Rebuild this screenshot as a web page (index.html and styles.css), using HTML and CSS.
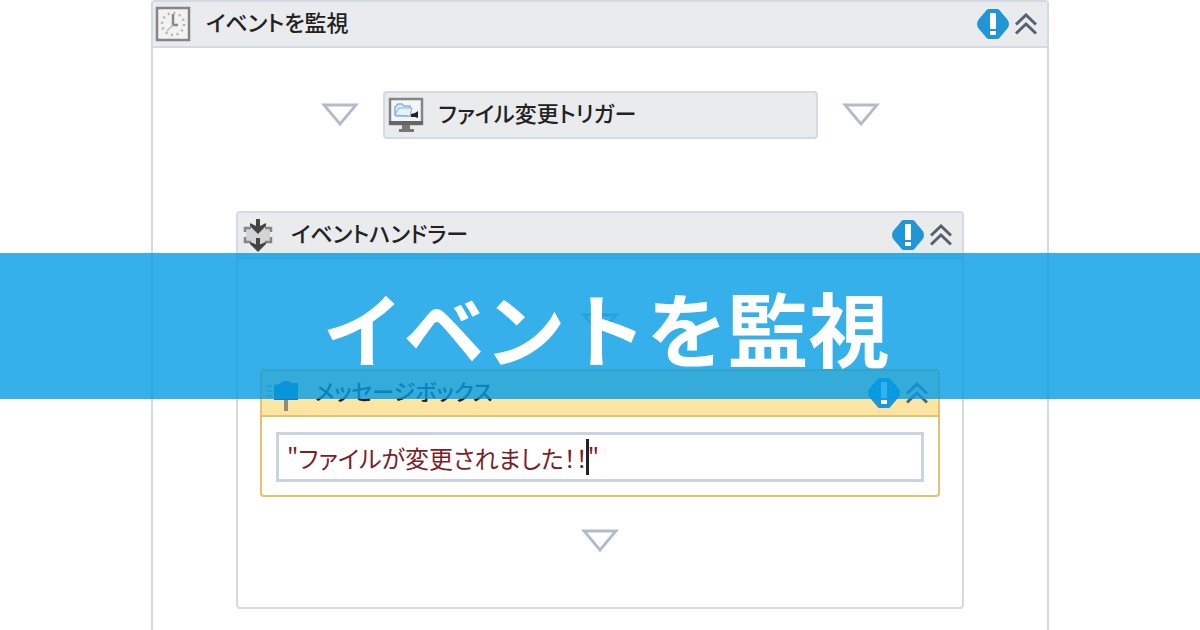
FILE: index.html
```
<!DOCTYPE html>
<html lang="ja">
<head>
    <meta charset="UTF-8">
    <meta name="viewport" content="width=device-width, initial-scale=1.0">
    <title>イベントを監視</title>
    <link rel="stylesheet" href="styles.css">
</head>
<body>
    <!-- Shapes used more than once -->
    <svg class="defs" aria-hidden="true">
        <symbol id="alert" viewBox="0 0 32 32">
            <path d="M11 1h10q2 1 3 3l6 7q2 2 2 5t-2 5l-6 7q-1 2-3 3H11q-2-1-3-3l-6-7q-2-2-2-5t2-5l6-7q1-2 3-3z" fill="#2196d6"/>
            <path d="M13 5h6v16h-6zM13 23h6v4h-6z" fill="#fff"/>
        </symbol>
        <symbol id="chevrons" viewBox="0 0 22 22">
            <path d="M1 11.500L11 2l10 9.500M1 20.500L11 11l10 9.500" fill="none" stroke="#56616f" stroke-width="3"/>
        </symbol>
        <symbol id="triangle" viewBox="0 0 38 24">
            <path d="M3 2h32L19 21z" fill="none" stroke="#b1bccb" stroke-width="2.800"/>
        </symbol>
    </svg>

    <main class="activity monitor">
        <header class="activity-header">
            <svg class="icon" viewBox="0 0 36 36" aria-hidden="true">
                <rect x="2" y="2" width="32" height="32" fill="#f2f2f2" stroke="#858585" stroke-width="2.500"/>
                <circle cx="18" cy="18" r="11" fill="none" stroke="#b4b4b4" stroke-width="2.500" stroke-dasharray="2 3.760"/>
                <path d="M18 8v11h5" fill="none" stroke="#888" stroke-width="2.500"/>
                <path d="M18 19l-6 6" stroke="#bbb" stroke-width="1.500"/>
            </svg>
            <h2 class="label">イベントを監視</h2>
            <svg class="alert" role="img" aria-label="警告"><use href="#alert"/></svg>
            <button class="collapse" type="button" aria-label="折りたたむ"><svg><use href="#chevrons"/></svg></button>
        </header>

        <div class="trigger-row">
            <svg class="triangle"><use href="#triangle"/></svg>
            <section class="trigger">
                <svg class="icon" viewBox="0 0 36 36" aria-hidden="true">
                    <rect x="2" y="2" width="32" height="25" fill="#f4f5f6" stroke="#858585" stroke-width="2.500"/>
                    <path d="M1 24h34v4H1z" fill="#666"/>
                    <path d="M14 28h8v4h4v3H11v-3h3z" fill="#777"/>
                    <path d="M7 18V10l3-3h4l2 2h6v10H8z" fill="#dceafa" stroke="#86b3de" stroke-width="1.500"/>
                    <path d="M7 18l4-7h13l-2 8z" fill="#e8f2fc" stroke="#86b3de"/>
                    <path d="M23 17l4-1 3-2v7l-3-1h-4z" fill="#222"/>
                </svg>
                <h3 class="label">ファイル変更トリガー</h3>
            </section>
            <svg class="triangle"><use href="#triangle"/></svg>
        </div>

        <section class="activity handler">
            <header class="activity-header">
                <svg class="icon" viewBox="0 0 36 36" aria-hidden="true">
                    <path d="M6 12h24v14H6z" fill="#d4d4d4"/>
                    <path d="M11 11H5v14h6M25 11h6v14h-6" fill="none" stroke="#858585" stroke-width="2.500" stroke-dasharray="10 5 20"/>
                    <path d="M18 2v9M18 21v8" stroke="#444" stroke-width="4"/>
                    <path d="M10 6l8 4 8-4v3l-8 8-8-8zM10 25l8 3 8-3v2l-8 8-8-8z" fill="#444"/>
                </svg>
                <h3 class="label">イベントハンドラー</h3>
                <svg class="alert" role="img" aria-label="警告"><use href="#alert"/></svg>
                <button class="collapse" type="button" aria-label="折りたたむ"><svg><use href="#chevrons"/></svg></button>
            </header>
            <div class="sequence">
                <svg class="triangle"><use href="#triangle"/></svg>
                <section class="activity message">
                    <header class="activity-header">
                        <svg class="icon" viewBox="0 0 36 36" aria-hidden="true">
                            <path d="M10 10l5-1 5-3h5l2 2h7v17H10z" fill="#2477ac"/>
                            <path d="M2 11h6M3 16h5M2 21h6" stroke="#8cb6c0" stroke-width="2"/>
                            <path d="M20 25h4v11h-4z" fill="#958878"/>
                        </svg>
                        <h4 class="label"><label for="text">メッセージボックス</label></h4>
                        <svg class="alert" role="img" aria-label="警告"><use href="#alert"/></svg>
                        <button class="collapse" type="button" aria-label="折りたたむ"><svg><use href="#chevrons"/></svg></button>
                    </header>
                    <div class="field">
                        <input id="text" type="text" value="&quot;ファイルが変更されました！！&quot;">
                        <span class="caret"></span>
                    </div>
                </section>
                <svg class="triangle"><use href="#triangle"/></svg>
            </div>
        </section>
    </main>

    <div class="banner">
        <h1>イベントを監視</h1>
    </div>
</body>
</html>
```

FILE: styles.css
```
* {
    box-sizing: border-box;
}
body {
    margin: 0;
    background: #fff;
    color: #222;
    font-family: "Noto Sans CJK JP", sans-serif;
    position: relative;
}
svg {
    display: block;
    flex: none;
}
.defs {
    display: none;
}
.activity {
    border: 2px solid #d3d9e5;
    border-radius: 4px;
    background: #fff;
}
.activity-header {
    display: flex;
    align-items: center;
    height: 46px;
    padding: 0 10px 0 2px;
    background: #e9ebec;
    border-bottom: 2px solid #d3d9e5;
}
.icon {
    width: 36px;
    height: 36px;
}
.label {
    flex: 1;
    margin: 0 0 0 15px;
    font-size: 22px;
    font-weight: 500;
    line-height: 32px;
    padding-bottom: 6px;
    font-feature-settings: "palt"; /* proportional kana */
    white-space: nowrap;
}
.alert {
    width: 32px;
    height: 32px;
}
.collapse {
    margin-left: 6px;
    padding: 0;
    border: 0;
    background: none;
    cursor: pointer;
}
.collapse svg {
    width: 22px;
    height: 22px;
}
.triangle {
    width: 38px;
    height: 24px;
}

/* Outer activity runs past the bottom of the window */
.monitor {
    max-width: 898px;
    min-height: 100vh;
    margin: 0 auto;
    padding-bottom: 22px;
    border-bottom: 0;
    border-radius: 4px 4px 0 0;
}
.trigger-row {
    display: flex;
    justify-content: center;
    align-items: center;
    gap: 24px;
    padding: 43px 0 72px;
}
.trigger {
    display: flex;
    align-items: center;
    flex: 0 1 435px;
    height: 48px;
    padding-left: 3px;
    background: #e9ebec;
    border: 2px solid #d3d9e5;
    border-radius: 4px;
}
.handler {
    margin: 0 83px;
}
.sequence {
    display: flex;
    flex-direction: column;
    align-items: center;
    gap: 32px;
    padding: 54px 22px;
}
.message {
    width: 100%;
    border-color: #e5c36c;
}
.message .activity-header {
    background: #fce4a3;
    border-color: #e5c36c;
}
.field {
    position: relative;
    padding: 15px 14px 13px;
}
.field input {
    display: block;
    width: 100%;
    height: 50px;
    padding: 0 8px;
    border: 3px solid #cbd2e0;
    background: #fff;
    color: #7c1f28;
    font-family: inherit;
    font-size: 24px;
    font-feature-settings: "palt";
}
.caret {
    position: absolute;
    top: 22px;
    left: 324px;
    width: 3px;
    height: 36px;
    background: #222;
}

/* Title band across the page */
.banner {
    position: absolute;
    top: 253px;
    left: 0;
    right: 0;
    display: flex;
    justify-content: center;
    align-items: center;
    height: 146px;
    padding-left: 12px;
    background: rgba(2, 156, 230, 0.8);
}
.banner h1 {
    margin: 0;
    color: #fff;
    font-size: 81px;
    font-weight: 700;
    line-height: 100px;
    white-space: nowrap;
}
```
